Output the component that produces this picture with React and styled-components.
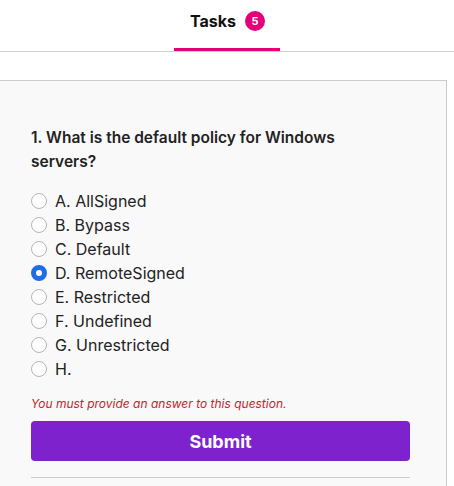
import React, { useState } from "react";
import styled, { createGlobalStyle } from "styled-components";

const GlobalStyle = createGlobalStyle`
  body {
    margin: 0;
    background: #ffffff;
    font-family: Inter, "Noto Sans", sans-serif;
    color: #222;
  }
`;

const options = [
  "A. AllSigned",
  "B. Bypass",
  "C. Default",
  "D. RemoteSigned",
  "E. Restricted",
  "F. Undefined",
  "G. Unrestricted",
  "H.",
];

const App = () => {
  const [selected, setSelected] = useState(3);

  return (
    <Page>
      <GlobalStyle />
      <TabBar>
        <Tab>
          Tasks
          <Badge>5</Badge>
        </Tab>
      </TabBar>
      <Body>
        <Panel>
          <Question>1. What is the default policy for Windows servers?</Question>
          <OptionList>
            {options.map((label, i) => (
              <Option key={label}>
                <Radio
                  type="radio"
                  name="policy"
                  checked={selected === i}
                  onChange={() => setSelected(i)}
                />
                {label}
              </Option>
            ))}
          </OptionList>
          <ErrorText>You must provide an answer to this question.</ErrorText>
          <SubmitButton>Submit</SubmitButton>
          <Divider />
        </Panel>
      </Body>
    </Page>
  );
};

const Page = styled.div`
  width: 454px;
  height: 486px;
  overflow: hidden;
`;

const TabBar = styled.div`
  display: flex;
  justify-content: center;
  height: 51px;
  border-bottom: 1px solid #cfcfcf;
`;

const Tab = styled.div`
  display: flex;
  align-items: center;
  gap: 9px;
  padding: 0 15px 6px 16px;
  box-sizing: border-box;
  height: 51px;
  border-bottom: 3px solid #e3007b;
  font-size: 16px;
  font-weight: 700;
  color: #111;
`;

const Badge = styled.span`
  display: flex;
  align-items: center;
  justify-content: center;
  width: 20px;
  height: 20px;
  border-radius: 50%;
  background: #e3007b;
  color: #fff;
  font-size: 11px;
  font-weight: 700;
`;

const Body = styled.div`
  padding: 28px 7px 0 0;
`;

const Panel = styled.div`
  margin-left: -6px;
  padding: 45px 36px 0 36px;
  background: #f9f9f9;
  border: 1px solid #cccccc;
  min-height: 500px;
`;

const Question = styled.h2`
  max-width: 340px;
  margin: 0 0 15px;
  font-size: 15.5px;
  line-height: 24px;
  font-weight: 600;
  color: #222;
`;

const OptionList = styled.div`
  display: flex;
  flex-direction: column;
`;

const Option = styled.label`
  display: flex;
  align-items: center;
  gap: 8px;
  height: 24px;
  font-size: 16px;
  color: #222;
`;

const Radio = styled.input`
  appearance: none;
  margin: 0;
  width: 16px;
  height: 16px;
  border-radius: 50%;
  border: 1px solid #b5b5b5;
  background: #fff;
  box-sizing: border-box;

  &:checked {
    border: 5px solid #1f6de6;
    background: #fff;
  }
`;

const ErrorText = styled.p`
  margin: 14px 0 8px;
  font-size: 12px;
  line-height: 18px;
  font-style: italic;
  color: #c0262d;
`;

const SubmitButton = styled.button`
  display: block;
  width: 100%;
  height: 40px;
  border: none;
  border-radius: 4px;
  background: #7e22ce;
  color: #fff;
  font-family: Inter, "Noto Sans", sans-serif;
  font-size: 18px;
  font-weight: 700;
`;

const Divider = styled.hr`
  margin: 16px 0 0;
  border: none;
  border-top: 1px solid #cccccc;
`;

export default App;
